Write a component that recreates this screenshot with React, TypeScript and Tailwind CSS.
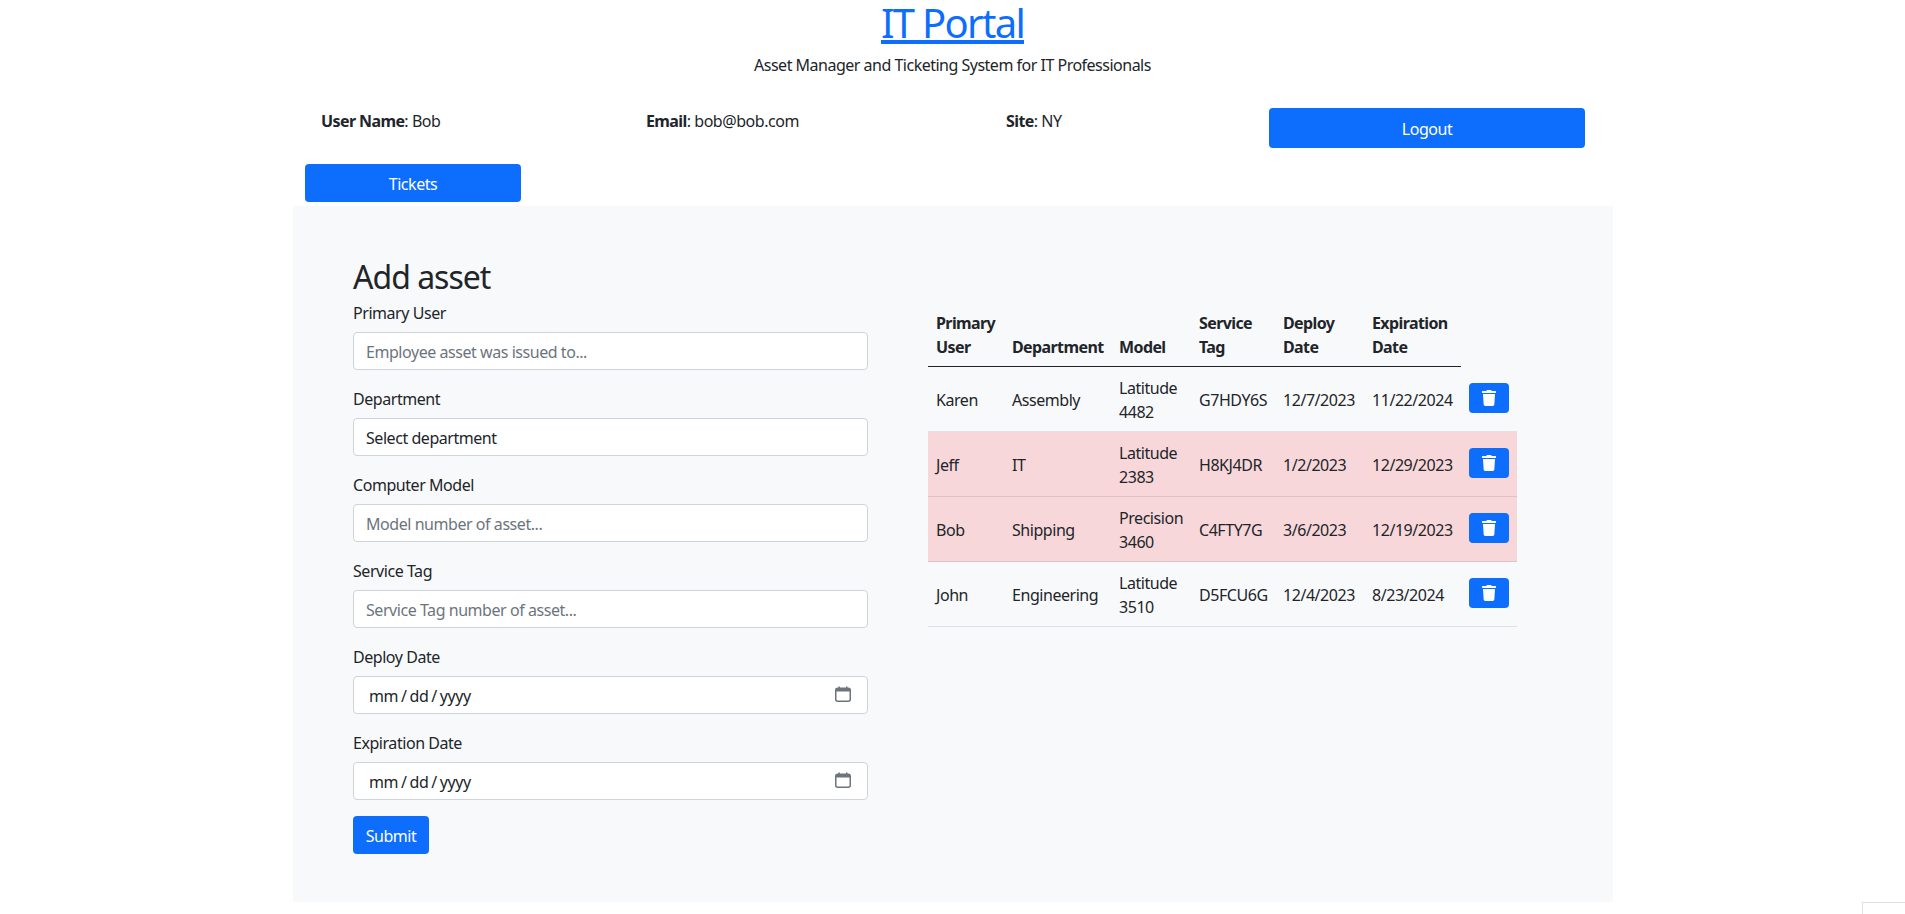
import { FaTrash } from "react-icons/fa";

const rows = [
  ["Karen", "Assembly", "Latitude 4482", "G7HDY6S", "12/7/2023", "11/22/2024", false],
  ["Jeff", "IT", "Latitude 2383", "H8KJ4DR", "1/2/2023", "12/29/2023", true],
  ["Bob", "Shipping", "Precision 3460", "C4FTY7G", "3/6/2023", "12/19/2023", true],
  ["John", "Engineering", "Latitude 3510", "D5FCU6G", "12/4/2023", "8/23/2024", false],
] as const;

const inputCls =
  "block w-full h-[38px] rounded-[4px] border border-[#ced4da] bg-white px-3 pt-[2px] text-[16px] text-[#212529] placeholder:text-[#6c757d] outline-none";
const btnCls = "rounded-[4px] bg-[#0d6efd] pt-0.5 text-white";

function Field({ label, children }: { label: string; children: React.ReactNode }) {
  return (
    <div className="mb-4">
      <label className="mb-2 block h-6 leading-[26px]">{label}</label>
      {children}
    </div>
  );
}

function DateInput() {
  return (
    <div className="relative">
      <input
        type="date"
        className={
          inputCls +
          " [&::-webkit-calendar-picker-indicator]:opacity-0 [&::-webkit-datetime-edit]:pl-[2px] [&::-webkit-datetime-edit-text]:px-[2px]"
        }
      />
      <svg viewBox="0 0 16 16" className="pointer-events-none absolute top-[10px] right-[17px] h-4 w-4" fill="none">
        <rect x="0.75" y="2.25" width="14.5" height="13" rx="2" stroke="#6c757d" strokeWidth="1.5" />
        <path d="M1 4a2 2 0 0 1 2-2h10a2 2 0 0 1 2 2v1.5H1z" fill="#6c757d" />
        <rect x="3.5" y="0.5" width="1.5" height="3" fill="#6c757d" />
        <rect x="11" y="0.5" width="1.5" height="3" fill="#6c757d" />
      </svg>
    </div>
  );
}

export default function App() {
  return (
    <div className="relative h-[914px] overflow-hidden bg-white font-['Noto_Sans',sans-serif] text-[16px] leading-6 tracking-[-0.45px] text-[#212529]">
      <header className="text-center">
        <h1 className="h-[53px] text-[40px] leading-[46px] tracking-[-1.7px] font-normal">
          <a href="#" className="text-[#0d6efd] underline">IT Portal</a>
        </h1>
        <p className="h-6 tracking-[-0.5px]">Asset Manager and Ticketing System for IT Professionals</p>
      </header>
      <div className="mx-auto w-[1320px]">
        <div className="mt-[31px] flex h-[56px] items-start">
          <div className="w-[353.5px] pt-px pl-[28.5px]"><b className="font-bold tracking-[-0.6px]">User Name</b>: Bob</div>
          <div className="w-[360px] pt-px"><b className="font-bold tracking-[-0.6px]">Email</b>: bob@bob.com</div>
          <div className="w-[263px] pt-px"><b className="font-bold tracking-[-0.6px]">Site</b>: NY</div>
          <button className={"h-10 w-[316px] " + btnCls}>Logout</button>
        </div>
        <div className="pl-[12.5px]">
          <button className={"h-[38px] w-[216px] " + btnCls}>Tickets</button>
        </div>
        <main className="mt-1 flex h-[696px] bg-[#f8f9fa] pt-[48px] pl-[60.5px]">
          <form className="w-[515px]">
            <h2 className="mb-2 h-[38.4px] text-[32px] leading-[46px] font-normal tracking-[-1px]">Add asset</h2>
            <Field label="Primary User"><input className={inputCls} placeholder="Employee asset was issued to..." /></Field>
            <Field label="Department">
              <select className={inputCls + " appearance-none"}><option>Select department</option></select>
            </Field>
            <Field label="Computer Model"><input className={inputCls} placeholder="Model number of asset..." /></Field>
            <Field label="Service Tag"><input className={inputCls} placeholder="Service Tag number of asset..." /></Field>
            <Field label="Deploy Date"><DateInput /></Field>
            <Field label="Expiration Date"><DateInput /></Field>
            <button type="button" className={"h-[38px] w-[76px] " + btnCls}>Submit</button>
          </form>
          <div className="mt-[48px] ml-[60px] w-[589px]">
            <table className="w-full table-fixed border-collapse">
              <colgroup>
                <col className="w-[76px]" />
                <col className="w-[107px]" />
                <col className="w-[80px]" />
                <col className="w-[84px]" />
                <col className="w-[89px]" />
                <col className="w-[97px]" />
                <col className="w-[56px]" />
              </colgroup>
              <thead>
                <tr className="h-[64px]">
                  {["Primary User", "Department", "Model", "Service Tag", "Deploy Date", "Expiration Date"].map((h) => (
                    <th key={h} className="border-b border-[#212529] px-2 pt-[9px] pb-[7px] text-left align-bottom font-bold tracking-[-0.6px]">{h}</th>
                  ))}
                  <th />
                </tr>
              </thead>
              <tbody>
                {rows.map((r) => (
                  <tr key={r[0]} className={"h-[64px] border-b " + (r[6] ? "border-[#dfc2c4] bg-[#f8d7da]" : "border-[#dee2e6]")}>
                    <td className="px-2 pt-[9px] pb-[7px]">{r[0]}</td>
                    <td className="px-2 pt-[9px] pb-[7px]">{r[1]}</td>
                    <td className="px-2 pt-[9px] pb-[7px]">{r[2]}</td>
                    <td className="px-2 pt-[9px] pb-[7px] whitespace-nowrap">{r[3]}</td>
                    <td className="px-2 pt-[9px] pb-[7px] whitespace-nowrap">{r[4]}</td>
                    <td className="px-2 pt-[9px] pb-[7px] whitespace-nowrap">{r[5]}</td>
                    <td className="px-2 py-2">
                      <button className="-mt-0.5 flex h-[30px] w-10 items-center justify-center rounded-[4px] bg-[#0d6efd] text-white"><FaTrash size={16} /></button>
                    </td>
                  </tr>
                ))}
              </tbody>
            </table>
          </div>
        </main>
      </div>
      <div className="absolute top-[902px] left-[1862px] h-3 w-[43px] border-t border-l border-[#e0e0e0] bg-white" />
    </div>
  );
}
